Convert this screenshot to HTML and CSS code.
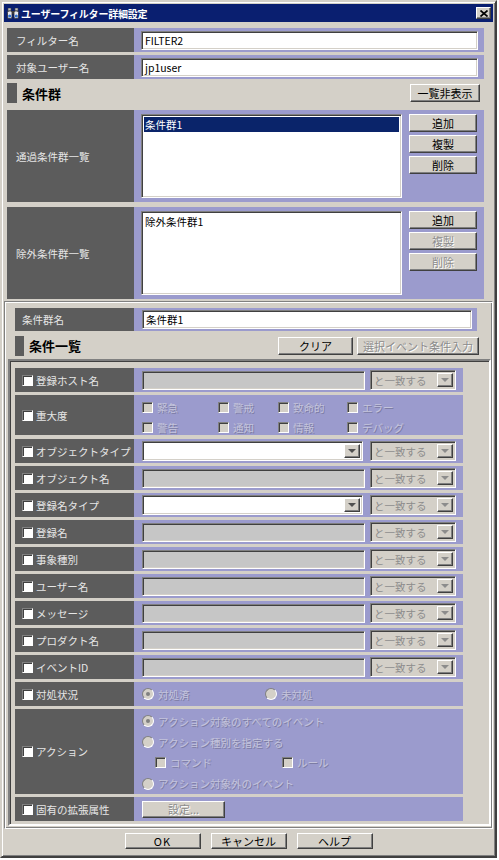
FILE: index.html
```html
<!DOCTYPE html>
<html lang="ja">
<head>
<meta charset="utf-8">
<title>ユーザーフィルター詳細設定</title>
<link rel="stylesheet" href="styles.css">
</head>
<body>
<div class="window">
  <div class="titlebar">
    <svg class="ticon" width="12" height="11" viewBox="0 0 12 11">
      <rect x="1" y="0" width="3" height="3" fill="#c0c0c0" stroke="#404040" stroke-width="0.6"/>
      <rect x="8" y="0" width="3" height="3" fill="#c0c0c0" stroke="#404040" stroke-width="0.6"/>
      <rect x="4" y="3" width="4" height="3" fill="#404040"/>
      <rect x="0.5" y="3" width="4.5" height="7.5" rx="1.5" fill="#e8e8f0" stroke="#303030" stroke-width="0.8"/>
      <rect x="7" y="3" width="4.5" height="7.5" rx="1.5" fill="#e8e8f0" stroke="#303030" stroke-width="0.8"/>
      <circle cx="2.7" cy="8" r="1.6" fill="#3070d0"/>
      <circle cx="9.3" cy="8" r="1.6" fill="#3070d0"/>
    </svg>
    <span class="ttl">ユーザーフィルター詳細設定</span>
    <span class="xbtn"><svg width="8" height="7" viewBox="0 0 8 7"><path d="M0.5 0.5L7.5 6.5M7.5 0.5L0.5 6.5" stroke="#000" stroke-width="1.7"/></svg></span>
  </div>
  <div class="content">
    <div class="upper">
      <div class="frow"><div class="lab">フィルター名</div><div class="fld"><div class="inp">FILTER2</div></div></div>
      <div class="frow"><div class="lab">対象ユーザー名</div><div class="fld"><div class="inp">jp1user</div></div></div>
      <div class="hdr"><span class="hmark"></span><span class="htxt">条件群</span><span class="btn hbtn">一覧非表示</span></div>
      <div class="lrow">
        <div class="lab">通過条件群一覧</div>
        <div class="fld lfld">
          <div class="listbox"><div class="item sel">条件群1</div></div>
          <div class="bcol"><span class="btn">追加</span><span class="btn">複製</span><span class="btn">削除</span></div>
        </div>
      </div>
      <div class="lrow">
        <div class="lab">除外条件群一覧</div>
        <div class="fld lfld">
          <div class="listbox"><div class="item">除外条件群1</div></div>
          <div class="bcol"><span class="btn">追加</span><span class="btn dis">複製</span><span class="btn dis">削除</span></div>
        </div>
      </div>
    </div>

    <div class="lower">
      <div class="frow nrow"><div class="lab">条件群名</div><div class="fld"><div class="inp">条件群1</div></div></div>
      <div class="hdr hdr2"><span class="hmark"></span><span class="htxt">条件一覧</span><span class="btn clr">クリア</span><span class="btn dis sbtn">選択イベント条件入力</span></div>
      <div class="inner">
        <div class="crow"><div class="clab"><span class="cb"></span>登録ホスト名</div><div class="cfld"><div class="ginp"></div><div class="combo"><span class="ctext">と一致する</span><span class="arr"><i></i></span></div></div></div>

        <div class="crow sev"><div class="clab"><span class="cb"></span>重大度</div>
          <div class="cfld sevfld">
            <div class="sevgrid">
              <span class="chk"><span class="cb g"></span>緊急</span>
              <span class="chk"><span class="cb g"></span>警戒</span>
              <span class="chk"><span class="cb g"></span>致命的</span>
              <span class="chk"><span class="cb g"></span>エラー</span>
              <span class="chk"><span class="cb g"></span>警告</span>
              <span class="chk"><span class="cb g"></span>通知</span>
              <span class="chk"><span class="cb g"></span>情報</span>
              <span class="chk"><span class="cb g"></span>デバッグ</span>
            </div>
          </div>
        </div>

        <div class="crow"><div class="clab"><span class="cb"></span>オブジェクトタイプ</div><div class="cfld"><div class="wcombo"><span class="arr en"><i></i></span></div><div class="combo"><span class="ctext">と一致する</span><span class="arr"><i></i></span></div></div></div>
        <div class="crow"><div class="clab"><span class="cb"></span>オブジェクト名</div><div class="cfld"><div class="ginp"></div><div class="combo"><span class="ctext">と一致する</span><span class="arr"><i></i></span></div></div></div>
        <div class="crow"><div class="clab"><span class="cb"></span>登録名タイプ</div><div class="cfld"><div class="wcombo"><span class="arr en"><i></i></span></div><div class="combo"><span class="ctext">と一致する</span><span class="arr"><i></i></span></div></div></div>
        <div class="crow"><div class="clab"><span class="cb"></span>登録名</div><div class="cfld"><div class="ginp"></div><div class="combo"><span class="ctext">と一致する</span><span class="arr"><i></i></span></div></div></div>
        <div class="crow"><div class="clab"><span class="cb"></span>事象種別</div><div class="cfld"><div class="ginp"></div><div class="combo"><span class="ctext">と一致する</span><span class="arr"><i></i></span></div></div></div>
        <div class="crow"><div class="clab"><span class="cb"></span>ユーザー名</div><div class="cfld"><div class="ginp"></div><div class="combo"><span class="ctext">と一致する</span><span class="arr"><i></i></span></div></div></div>
        <div class="crow"><div class="clab"><span class="cb"></span>メッセージ</div><div class="cfld"><div class="ginp"></div><div class="combo"><span class="ctext">と一致する</span><span class="arr"><i></i></span></div></div></div>
        <div class="crow"><div class="clab"><span class="cb"></span>プロダクト名</div><div class="cfld"><div class="ginp"></div><div class="combo"><span class="ctext">と一致する</span><span class="arr"><i></i></span></div></div></div>
        <div class="crow"><div class="clab"><span class="cb"></span>イベントID</div><div class="cfld"><div class="ginp"></div><div class="combo"><span class="ctext">と一致する</span><span class="arr"><i></i></span></div></div></div>

        <div class="crow"><div class="clab"><span class="cb"></span>対処状況</div>
          <div class="cfld stfld">
            <span class="rad st1"><span class="rb on"></span>対処済</span>
            <span class="rad"><span class="rb"></span>未対処</span>
          </div>
        </div>

        <div class="crow act"><div class="clab"><span class="cb"></span>アクション</div>
          <div class="cfld actfld">
            <span class="rad"><span class="rb on"></span>アクション対象のすべてのイベント</span>
            <span class="rad"><span class="rb"></span>アクション種別を指定する</span>
            <span class="subchk"><span class="chk c1"><span class="cb g"></span>コマンド</span><span class="chk"><span class="cb g"></span>ルール</span></span>
            <span class="rad"><span class="rb"></span>アクション対象外のイベント</span>
          </div>
        </div>

        <div class="crow last"><div class="clab"><span class="cb"></span>固有の拡張属性</div><div class="cfld"><span class="btn dis setbtn">設定...</span></div></div>
      </div>
    </div>

    <div class="footer">
      <span class="btn fbtn ok">OK</span>
      <span class="btn fbtn">キャンセル</span>
      <span class="btn fbtn">ヘルプ</span>
    </div>
  </div>
</div>
</body>
</html>
```

FILE: styles.css
```css
* { box-sizing: border-box; }

body {
  margin: 0;
  background: #ffffff;
  font-family: "Noto Sans CJK JP", "Noto Sans", sans-serif;
  font-size: 10.5px;
  color: #000;
}

.window {
  width: 497px;
  height: 858px;
  background: #d4d0c8;
  border: 2px solid;
  border-color: #d4d0c8 #404040 #404040 #d4d0c8;
  box-shadow: inset 1px 1px #ffffff, inset -1px -1px #808080;
  padding: 2px;
  display: flex;
  flex-direction: column;
}

.titlebar {
  height: 18px;
  background: #0a1f70;
  color: #fff;
  display: flex;
  align-items: center;
  padding: 0 2px 0 2px;
  flex: none;
}
.ticon { margin: 1px 2px 0 1px; flex: none; }
.ttl { font-weight: bold; font-size: 10px; letter-spacing: -0.2px; }
.xbtn {
  margin-left: auto;
  width: 15px;
  height: 12px;
  background: #d4d0c8;
  border: 1px solid;
  border-color: #fff #404040 #404040 #fff;
  box-shadow: inset -1px -1px #808080;
  display: flex;
  align-items: center;
  justify-content: center;
}

.content {
  display: flex;
  flex-direction: column;
  flex: 1;
}

/* ---------- upper ---------- */
.upper { padding: 6px 0 0 3px; }

.frow {
  display: flex;
  width: 477px;
  height: 24px;
  margin-bottom: 3px;
}
.lab {
  width: 127px;
  flex: none;
  background: #5c5c5c;
  color: #e6e6e6;
  display: flex;
  align-items: center;
  padding-left: 9px;
}
.fld {
  flex: 1;
  background: #9b9bcd;
  display: flex;
  align-items: center;
  padding: 0 6px 0 7px;
}
.inp {
  flex: 1;
  height: 19px;
  background: #fff;
  border: 1px solid;
  border-color: #808080 #fff #fff #808080;
  box-shadow: inset 1px 1px #404040, inset -1px -1px #d4d0c8;
  display: flex;
  align-items: center;
  padding: 0 3px;
  font-size: 10.5px;
}

.hdr {
  display: flex;
  align-items: center;
  width: 477px;
  height: 22px;
  margin-top: 1px;
  margin-bottom: 6px;
}
.hmark {
  width: 10px;
  height: 20px;
  background: #5c5c5c;
  margin-right: 5px;
}
.htxt { font-weight: bold; font-size: 13px; }

.btn {
  background: #d4d0c8;
  border: 1px solid;
  border-color: #fff #404040 #404040 #fff;
  box-shadow: inset -1px -1px #808080;
  display: flex;
  align-items: center;
  justify-content: center;
  font-size: 11px;
  color: #000;
}
.btn.dis { color: #8c8c8c; text-shadow: 1px 1px 0 #fff; }
.hbtn { margin-left: auto; width: 70px; height: 18px; margin-right: 4px; }

.lrow {
  display: flex;
  width: 477px;
  height: 92px;
  margin-bottom: 5px;
}
.lrow:last-child { margin-bottom: 0; }
.lfld {
  align-items: flex-start;
  padding: 4px 6px 0 7px;
  gap: 7px;
}
.listbox {
  width: 261px;
  height: 84px;
  background: #fff;
  border: 1px solid;
  border-color: #808080 #fff #fff #808080;
  box-shadow: inset 1px 1px #404040, inset -1px -1px #d4d0c8;
  padding: 2px;
}
.item { height: 15px; line-height: 15px; padding-left: 1px; }
.item.sel { background: #0a246a; color: #fff; }
.bcol { display: flex; flex-direction: column; gap: 3px; }
.bcol .btn { width: 68px; height: 18px; }

/* ---------- lower ---------- */
.lower {
  margin-top: 2px;
  border: 1px solid;
  border-color: #808080 #fff #fff #808080;
  box-shadow: inset 1px 1px #fff, inset -1px -1px #808080;
  padding: 6px 0 0 0;
}
.nrow { width: 462px; height: 23px; margin-left: 10px; margin-bottom: 4px; }
.nrow .lab { width: 119px; padding-left: 7px; }
.nrow .fld { padding: 0 5px 0 8px; }

.hdr2 { width: 464px; margin: 0 0 3px 10px; height: 21px; }
.hdr2 .hmark { width: 9px; }
.clr { margin-left: auto; width: 75px; height: 18px; }
.sbtn { margin-left: 4px; width: 122px; height: 18px; }

.inner {
  margin: 0 1px 2px 3px;
  border: 2px solid;
  border-color: #808080 #fff #fff #808080;
  box-shadow: inset 1px 1px #404040;
  padding: 7px 0 3px 5px;
}

.crow {
  display: flex;
  width: 448px;
  height: 24px;
  margin-bottom: 3px;
}
.crow.last { margin-bottom: 0; }
.crow.sev { height: 40px; margin-bottom: 4px; }
.crow.act { height: 85px; }

.clab {
  width: 119px;
  flex: none;
  background: #5c5c5c;
  color: #e6e6e6;
  display: flex;
  align-items: center;
  padding-left: 7px;
}
.cb {
  width: 11px;
  height: 11px;
  flex: none;
  background: #fff;
  border: 1px solid;
  border-color: #808080 #fff #fff #808080;
  box-shadow: inset 1px 1px #404040;
  margin-right: 3px;
}
.cb.g { background: #d4d0c8; }

.cfld {
  flex: 1;
  background: #9b9bcd;
  display: flex;
  align-items: center;
  padding-left: 8px;
  gap: 5px;
}

.ginp {
  width: 223px;
  height: 19px;
  background: #c6c6c6;
  border: 1px solid;
  border-color: #808080 #fff #fff #808080;
  box-shadow: inset 1px 1px #404040, inset -1px -1px #d4d0c8;
}
.wcombo {
  width: 221px;
  height: 20px;
  background: #fff;
  border: 1px solid;
  border-color: #808080 #fff #fff #808080;
  box-shadow: inset 1px 1px #404040, inset -1px -1px #d4d0c8;
  padding: 2px;
  display: flex;
  justify-content: flex-end;
  margin-right: 2px;
}
.combo {
  width: 86px;
  height: 20px;
  background: #d4d0c8;
  border: 1px solid;
  border-color: #808080 #fff #fff #808080;
  box-shadow: inset 1px 1px #404040, inset -1px -1px #d4d0c8;
  padding: 2px;
  display: flex;
  align-items: center;
}
.ctext { flex: 1; color: #8c8c8c; padding-left: 1px; font-size: 10.5px; }
.arr {
  width: 16px;
  height: 100%;
  background: #d4d0c8;
  border: 1px solid;
  border-color: #fff #404040 #404040 #fff;
  box-shadow: inset -1px -1px #808080;
  display: flex;
  align-items: center;
  justify-content: center;
}
.arr i {
  width: 0;
  height: 0;
  border-left: 4px solid transparent;
  border-right: 4px solid transparent;
  border-top: 4px solid #8c8c8c;
}
.arr.en i { border-top-color: #505050; }

.chk, .rad {
  display: flex;
  align-items: center;
  color: #c4c4dc;
  text-shadow: 1px 1px 0 #7c7ca4;
}
.chk .cb { margin-right: 4px; }

.sevfld { align-items: flex-start; padding-top: 2px; }
.sevgrid {
  display: grid;
  grid-template-columns: 76px 60px 69px auto;
  grid-auto-rows: 20px;
}

.rb {
  width: 12px;
  height: 12px;
  flex: none;
  border-radius: 50%;
  background: #d4d0c8;
  border: 1px solid;
  border-color: #808080 #fff #fff #808080;
  margin-right: 4px;
  display: flex;
  align-items: center;
  justify-content: center;
}
.rb.on::after {
  content: "";
  width: 4px;
  height: 4px;
  border-radius: 50%;
  background: #808080;
}
.stfld { gap: 0; }
.st1 { width: 123px; }

.actfld {
  flex-direction: column;
  align-items: flex-start;
  padding-top: 2px;
  gap: 0;
}
.actfld > span { height: 21px; }
.subchk { display: flex; padding-left: 13px; }
.c1 { width: 127px; }

.setbtn { width: 83px; height: 17px; }

/* ---------- footer ---------- */
.footer {
  display: flex;
  justify-content: center;
  gap: 10px;
  margin-top: 4px;
}
.fbtn { width: 76px; height: 16px; font-size: 11px; }
.ok { letter-spacing: 1px; }
```
